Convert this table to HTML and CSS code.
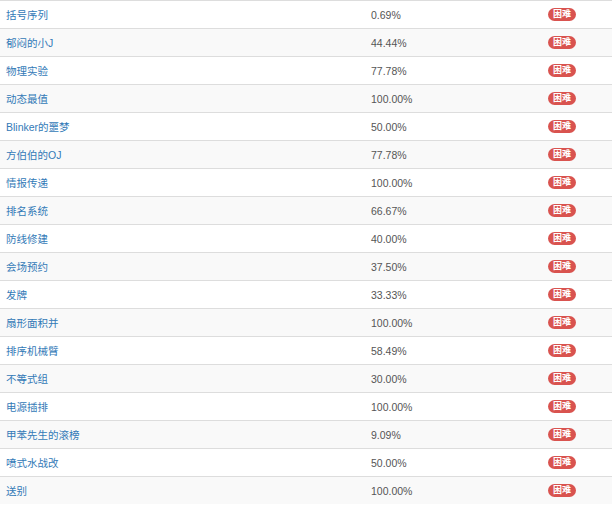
FILE: index.html
```html
<!DOCTYPE html>
<html lang="zh-CN">
<head>
<meta charset="utf-8">
<title>题目列表</title>
<link rel="stylesheet" href="styles.css">
</head>
<body>
<table class="problems">
  <colgroup>
    <col class="col-name">
    <col class="col-rate">
    <col class="col-level">
  </colgroup>
  <tbody>
    <tr><td><a href="#">括号序列</a></td><td>0.69%</td><td><span class="badge">困难</span></td></tr>
    <tr><td><a href="#">郁闷的小J</a></td><td>44.44%</td><td><span class="badge">困难</span></td></tr>
    <tr><td><a href="#">物理实验</a></td><td>77.78%</td><td><span class="badge">困难</span></td></tr>
    <tr><td><a href="#">动态最值</a></td><td>100.00%</td><td><span class="badge">困难</span></td></tr>
    <tr><td><a href="#">Blinker的噩梦</a></td><td>50.00%</td><td><span class="badge">困难</span></td></tr>
    <tr><td><a href="#">方伯伯的OJ</a></td><td>77.78%</td><td><span class="badge">困难</span></td></tr>
    <tr><td><a href="#">情报传递</a></td><td>100.00%</td><td><span class="badge">困难</span></td></tr>
    <tr><td><a href="#">排名系统</a></td><td>66.67%</td><td><span class="badge">困难</span></td></tr>
    <tr><td><a href="#">防线修建</a></td><td>40.00%</td><td><span class="badge">困难</span></td></tr>
    <tr><td><a href="#">会场预约</a></td><td>37.50%</td><td><span class="badge">困难</span></td></tr>
    <tr><td><a href="#">发牌</a></td><td>33.33%</td><td><span class="badge">困难</span></td></tr>
    <tr><td><a href="#">扇形面积并</a></td><td>100.00%</td><td><span class="badge">困难</span></td></tr>
    <tr><td><a href="#">排序机械臂</a></td><td>58.49%</td><td><span class="badge">困难</span></td></tr>
    <tr><td><a href="#">不等式组</a></td><td>30.00%</td><td><span class="badge">困难</span></td></tr>
    <tr><td><a href="#">电源插排</a></td><td>100.00%</td><td><span class="badge">困难</span></td></tr>
    <tr><td><a href="#">甲苯先生的滚榜</a></td><td>9.09%</td><td><span class="badge">困难</span></td></tr>
    <tr><td><a href="#">喷式水战改</a></td><td>50.00%</td><td><span class="badge">困难</span></td></tr>
    <tr><td><a href="#">送别</a></td><td>100.00%</td><td><span class="badge">困难</span></td></tr>
  </tbody>
</table>
</body>
</html>
```
FILE: styles.css
```css
html, body {
  margin: 0;
  padding: 0;
  background: #fff;
}

body {
  font-family: "Liberation Sans", "Noto Sans CJK SC", sans-serif;
  font-size: 10.5px;
  line-height: 14px;
  color: #555;
}

.problems {
  width: 612px;
  border-collapse: separate;
  border-spacing: 0;
  table-layout: fixed;
}

.col-name { width: 365px; }
.col-rate { width: 177px; }
.col-level { width: 70px; }

.problems td {
  box-sizing: border-box;
  height: 28px;
  padding: 0 6px;
  border-top: 1px solid #ddd;
  vertical-align: middle;
  white-space: nowrap;
  overflow: hidden;
}

.problems tr:nth-child(even) td {
  background: #f9f9f9;
}

.problems a {
  color: #337ab7;
  text-decoration: none;
}

.badge {
  display: inline-block;
  padding: 2px 5px;
  font-size: 9px;
  line-height: 9.5px;
  font-weight: bold;
  color: #fff;
  background: #d9534f;
  border-radius: 8px;
  vertical-align: top;
}
```
